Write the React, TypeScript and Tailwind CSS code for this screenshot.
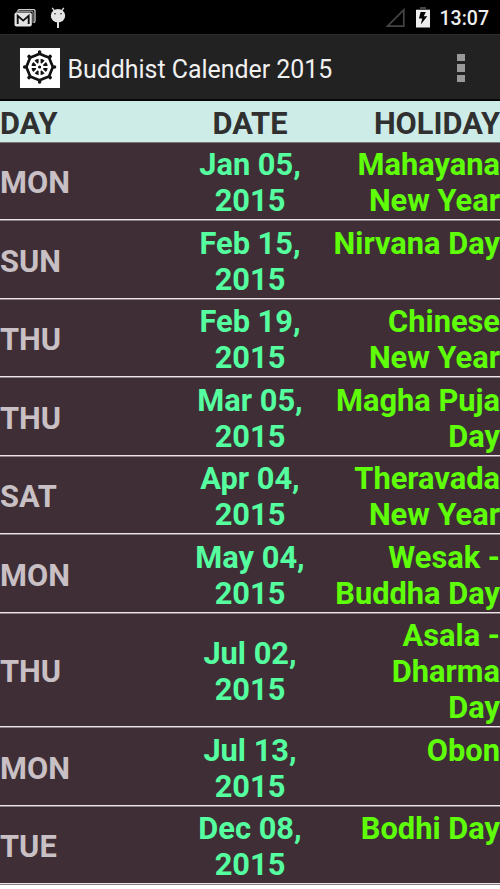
import clsx from "clsx";

type Holiday = {
  day: string;
  date: string[];
  name: string[];
  height: string;
};

const holidays: Holiday[] = [
  { day: "MON", date: ["Jan 05,", "2015"], name: ["Mahayana", "New Year"], height: "h-[78.4px]" },
  { day: "SUN", date: ["Feb 15,", "2015"], name: ["Nirvana Day"], height: "h-[78.5px]" },
  { day: "THU", date: ["Feb 19,", "2015"], name: ["Chinese", "New Year"], height: "h-[78.5px]" },
  { day: "THU", date: ["Mar 05,", "2015"], name: ["Magha Puja", "Day"], height: "h-[78.5px]" },
  { day: "SAT", date: ["Apr 04,", "2015"], name: ["Theravada", "New Year"], height: "h-[78.5px]" },
  { day: "MON", date: ["May 04,", "2015"], name: ["Wesak -", "Buddha Day"], height: "h-[78.5px]" },
  { day: "THU", date: ["Jul 02,", "2015"], name: ["Asala -", "Dharma", "Day"], height: "h-[114.5px]" },
  { day: "MON", date: ["Jul 13,", "2015"], name: ["Obon"], height: "h-[78.5px]" },
  { day: "TUE", date: ["Dec 08,", "2015"], name: ["Bodhi Day"], height: "h-[78px]" },
];

const spokes = [0, 45, 90, 135, 180, 225, 270, 315];

function MailIcon() {
  return (
    <svg className="h-[18px] w-[22px]" viewBox="0 0 22 18">
      <path d="M4 2.6V1.8Q4 .7 5.2 .7H19.8Q21 .7 21 1.8V12Q21 13.4 19.6 13.6" fill="none" stroke="#cfcfcf" strokeWidth="1.3" />
      <path d="M2.5 3.6Q2.8 2.4 4 2.4H17.5Q19 2.4 19 3.8V14" fill="none" stroke="#8a8a8a" strokeWidth="1.2" />
      <rect x=".5" y="3.6" width="17.3" height="13.8" rx="2" fill="#e4e4e4" />
      <path d="M3.7 15V6.8L9.2 11.6L14.7 6.8V15" fill="none" stroke="#111" strokeWidth="1.9" />
    </svg>
  );
}

function DroidIcon() {
  return (
    <svg className="h-[22px] w-[16px]" viewBox="0 0 16 22">
      <path d="M2.2 .8L4.5 4M13.8 .8L11.5 4" stroke="#dedede" strokeWidth="1.3" />
      <ellipse cx="8" cy="8.7" rx="7.2" ry="6.7" fill="#e4e4e4" />
      <circle cx="5" cy="6.7" r=".8" fill="#222" />
      <circle cx="11" cy="6.7" r=".8" fill="#222" />
      <path d="M8 15V21" stroke="#dedede" strokeWidth="2" />
    </svg>
  );
}

function DharmaWheel() {
  return (
    <svg className="h-10 w-10" viewBox="-19.6 -19 40 40">
      <rect x="-19.6" y="-19" width="40" height="40" fill="#fff" />
      {spokes.map((angle) => (
        <g key={angle} transform={`rotate(${angle})`}>
          <path d="M0 -13.3Q4.4 -11.4 9.4 -9.4" fill="none" stroke="#111" strokeWidth="2.7" />
          <circle cy="-14.9" r="1.8" fill="#111" />
        </g>
      ))}
      <circle r="6.1" fill="none" stroke="#111" strokeWidth="4.2" />
      {spokes.map((angle) => (
        <path key={angle} d="M0 -2.6V-9" stroke="#fff" strokeWidth="2" transform={`rotate(${angle})`} />
      ))}
      <circle r="1.6" fill="#111" />
    </svg>
  );
}

function StatusBar() {
  return (
    <div className="flex h-[34px] items-start bg-black">
      <div className="flex pl-[14px]">
        <div className="pt-[9px]">
          <MailIcon />
        </div>
        <div className="pl-[14px] pt-[7px]">
          <DroidIcon />
        </div>
      </div>
      <div className="ml-auto flex pr-[11px]">
        <svg className="mt-[7px] h-[21px] w-[21px]" viewBox="0 0 21 21">
          <path d="M2.5 19.2H18.8V2.8Z" fill="none" stroke="#444" strokeWidth="1.7" />
        </svg>
        <svg className="ml-[10px] mt-[7px] h-[21px] w-[14px]" viewBox="0 0 14 21">
          <path d="M4 0H10V2H14V4H0V2H4Z" fill="#444" />
          <rect y="3" width="14" height="17.5" fill="#eee" />
          <path d="M9.8 5H4.6L3 11.5H6.2L4.8 17.6L11.3 9.3H7.8Z" fill="#000" />
        </svg>
        <span className="ml-[10px] mt-[6px] text-[19.5px] font-medium leading-[26px] text-[#eee]">13:07</span>
      </div>
    </div>
  );
}

function ActionBar() {
  return (
    <div className="flex h-[67px] items-center border-b-2 border-t border-b-[#080808] border-t-[#2c2c2c] bg-[#222] pl-5 pr-[35px] pt-[2px]">
      <DharmaWheel />
      <h1 className="ml-[7.5px] pt-[3px] text-[24.9px] leading-8 text-[#f0f0f0]">Buddhist Calender 2015</h1>
      <div className="ml-auto flex flex-col gap-[3px]">
        <span className="h-[7.5px] w-2 bg-[#999]" />
        <span className="h-[7.5px] w-2 bg-[#999]" />
        <span className="h-[7.5px] w-2 bg-[#999]" />
      </div>
    </div>
  );
}

function Lines({ lines, className }: { lines: string[]; className: string }) {
  return (
    <div className={clsx("whitespace-nowrap", className)}>
      {lines.map((line) => (
        <div key={line}>{line}</div>
      ))}
    </div>
  );
}

function HolidayRow({ day, date, name, height }: Holiday) {
  return (
    <div
      className={clsx(
        "grid grid-cols-3 border-b border-[#8c8087] bg-[#3f2e36] pb-[0.9px] pt-[4.6px] shadow-[inset_0_-1px_0_#eee3e9]",
        height,
      )}
    >
      <div className="self-center text-[#c8c0c4]">{day}</div>
      <Lines lines={date} className="self-center text-center text-[#55ff9f]" />
      <Lines lines={name} className="justify-self-end text-right text-[#5eff08]" />
    </div>
  );
}

export default function App() {
  return (
    <div className="h-[889px] w-[500px] overflow-hidden bg-white font-[Roboto,sans-serif]">
      <StatusBar />
      <ActionBar />
      <main className="text-[30.8px] font-bold leading-[36px]">
        <div className="grid h-[41.7px] grid-cols-3 border-b border-[#777] bg-[#cdece8] pt-[5px] text-[#303030]">
          <div>DAY</div>
          <div className="text-center">DATE</div>
          <div className="text-right">HOLIDAY</div>
        </div>
        {holidays.map((holiday) => (
          <HolidayRow key={holiday.date[0]} {...holiday} />
        ))}
      </main>
    </div>
  );
}
